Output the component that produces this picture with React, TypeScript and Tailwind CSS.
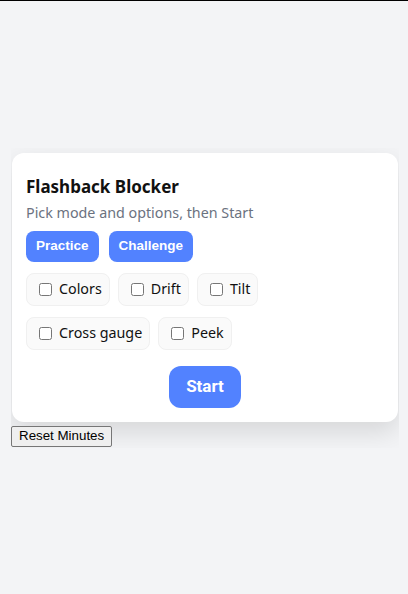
import React from "react";

const sans = { fontFamily: '"Noto Sans", "Open Sans", sans-serif' };

function Chip({ label }: { label: string }) {
  return (
    <label className="flex items-center gap-[7px] h-[33px] pl-[12px] pr-[7px] rounded-[8px] bg-[#fafafa] border border-[#f0f0f0] text-[14.3px] text-[#111]">
      <input type="checkbox" className="w-[13px] h-[13px] m-0" />
      <span>{label}</span>
    </label>
  );
}

export default function App() {
  return (
    <div className="min-h-[594px] bg-[#f3f4f6] border-t border-black flex items-center" style={sans}>
      <div className="ml-[11px] w-[388px] overflow-hidden pt-[5px] pb-[1px]">
        <div className="mx-[1px] bg-white rounded-[12px] shadow-[0_10px_26px_rgba(0,0,0,0.12)] px-[14px] pt-[21px] pb-[14px]">
          <h1 className="text-[17px] font-bold leading-[26px] text-[#111]">Flashback Blocker</h1>
          <p className="text-[14.3px] text-[#6b7280] leading-[22px] mt-[2px]">Pick mode and options, then Start</p>
          <div className="flex gap-[10px] mt-[7px]" style={{ fontFamily: '"Liberation Sans", Arial, sans-serif' }}>
            <button className="h-[31px] px-[10px] rounded-[8px] bg-[#5282ff] text-white text-[13.5px] font-bold">Practice</button>
            <button className="h-[31px] px-[10px] rounded-[8px] bg-[#5282ff] text-white text-[13.5px] font-bold">Challenge</button>
          </div>
          <div className="flex gap-[8px] mt-[11px]">
            <Chip label="Colors" />
            <Chip label="Drift" />
            <Chip label="Tilt" />
          </div>
          <div className="flex gap-[8px] mt-[11px]">
            <Chip label="Cross gauge" />
            <Chip label="Peek" />
          </div>
          <div className="flex justify-center mt-[16px]">
            <button className="h-[42px] w-[72px] rounded-[12px] bg-[#5282ff] text-white text-[17px] font-bold" style={{ fontFamily: 'Roboto, "Liberation Sans", sans-serif' }}>Start</button>
          </div>
        </div>
        <button className="mt-[4px] h-[21px] px-[7px] text-[13.33px] bg-[#efefef] border border-[#767676] rounded-[2px] text-black leading-none" style={{ fontFamily: '"Liberation Sans", Arial, sans-serif' }}>Reset Minutes</button>
      </div>
    </div>
  );
}
